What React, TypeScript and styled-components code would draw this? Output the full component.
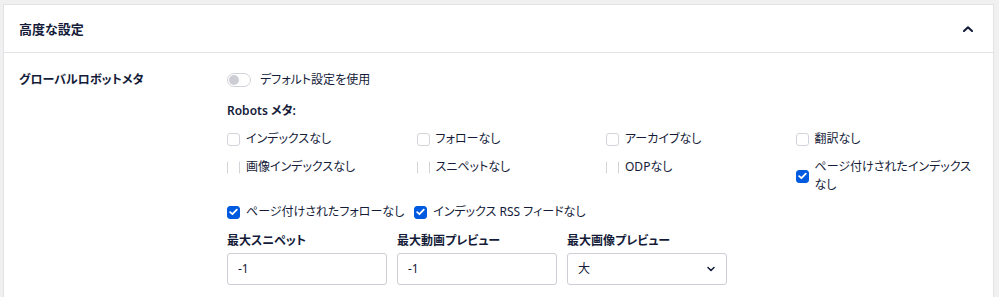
import styled, { createGlobalStyle } from "styled-components";

const GlobalStyle = createGlobalStyle`
  html, body {
    margin: 0;
    background: #f0f0f1;
  }
  body {
    font-family: "Noto Sans", "Noto Sans CJK JP", sans-serif;
    font-feature-settings: "palt";
    color: #141b38;
    overflow: hidden;
  }
  * { box-sizing: border-box; }
`;

const Page = styled.div`
  padding: 4px 5px 0 3px;
`;

const Card = styled.section`
  background: #fff;
  border: 1px solid #e2e3e6;
  min-height: 320px;
`;

const Header = styled.header`
  height: 48px;
  display: flex;
  align-items: center;
  justify-content: space-between;
  padding: 0 20px 0 15px;
  border-bottom: 1px solid #e2e3e6;
`;

const Title = styled.h2`
  margin: 0;
  font-size: 13px;
  font-weight: 700;
  line-height: 18px;
`;

const Row = styled.div`
  display: flex;
  padding: 17px 15px 0 15px;
`;

const RowLabel = styled.div`
  width: 208px;
  flex-shrink: 0;
  font-size: 12px;
  font-weight: 700;
  line-height: 18px;
  padding-top: 1px;
`;

const Content = styled.div`
  flex: 1;
  display: flex;
  flex-direction: column;
  font-size: 12px;
  line-height: 18px;
`;

const ToggleLine = styled.label`
  display: flex;
  align-items: center;
  gap: 9px;
  height: 20px;
`;

const Track = styled.span`
  width: 24px;
  height: 14px;
  border-radius: 7px;
  border: 1px solid #d2d3d9;
  background: #fff;
  display: flex;
  align-items: center;
  padding-left: 1px;
`;

const Knob = styled.span`
  width: 10px;
  height: 10px;
  border-radius: 50%;
  background: #cdced5;
`;

const SubTitle = styled.div`
  margin-top: 12px;
  font-size: 12px;
  font-weight: 600;
`;

const Grid = styled.div`
  display: grid;
  grid-template-columns: repeat(4, 189.5px);
  row-gap: 10px;
  margin-top: 10px;
  align-items: start;
`;

const Item = styled.label`
  display: flex;
  align-items: center;
  gap: 6px;
`;

const Text = styled.span`
  word-break: keep-all;
`;

const Box = styled.span<{ $checked?: boolean; $faint?: boolean }>`
  width: 13px;
  height: 13px;
  flex-shrink: 0;
  border-radius: 3px;
  border: 1px solid
    ${(p) => (p.$checked ? "#005ae0" : "#d3d4da")};
  ${(p) =>
    p.$faint &&
    `border-top-color: #fff; border-bottom-color: #fff; border-radius: 1px;`}
  background: ${(p) => (p.$checked ? "#005ae0" : "#fff")};
  display: flex;
  align-items: center;
  justify-content: center;
`;

const Inline = styled.div`
  display: flex;
  gap: 10px;
  margin-top: 9px;
`;

const Fields = styled.div`
  display: flex;
  gap: 10px;
  margin-top: 11px;
`;

const Field = styled.div`
  display: flex;
  flex-direction: column;
  gap: 3px;
  width: 160px;
`;

const FieldLabel = styled.div`
  font-size: 12px;
  font-weight: 700;
  line-height: 18px;
`;

const Input = styled.div`
  height: 32px;
  border: 1px solid #cdcfd6;
  border-radius: 3px;
  padding: 0 10px;
  display: flex;
  align-items: center;
  justify-content: space-between;
  font-size: 12px;
`;

const Check = () => (
  <svg width="9" height="8" viewBox="0 0 9 8">
    <path
      d="M1.2 4.2 L3.4 6.2 L7.8 1.6"
      fill="none"
      stroke="#fff"
      strokeWidth="1.8"
      strokeLinecap="round"
      strokeLinejoin="round"
    />
  </svg>
);

const Chevron = ({ up }: { up?: boolean }) => (
  <svg width="10" height="6" viewBox="0 0 10 6">
    <path
      d={up ? "M1 5 L5 1.2 L9 5" : "M2 1.5 L5 4.5 L8 1.5"}
      fill="none"
      stroke="#141b38"
      strokeWidth={up ? 2 : 1.5}
      strokeLinecap="round"
      strokeLinejoin="round"
    />
  </svg>
);

type Opt = { label: string; checked?: boolean; faint?: boolean };

const gridOptions: Opt[] = [
  { label: "インデックスなし" },
  { label: "フォローなし" },
  { label: "アーカイブなし" },
  { label: "翻訳なし" },
  { label: "画像インデックスなし", faint: true },
  { label: "スニペットなし", faint: true },
  { label: "ODPなし", faint: true },
  { label: "ページ付けされたインデックス\u200bなし", checked: true },
];

const Option = ({ label, checked, faint }: Opt) => (
  <Item>
    <Box $checked={checked} $faint={faint}>
      {checked && <Check />}
    </Box>
    <Text>{label}</Text>
  </Item>
);

export default function App() {
  return (
    <>
      <GlobalStyle />
      <Page>
        <Card>
          <Header>
            <Title>高度な設定</Title>
            <Chevron up />
          </Header>
          <Row>
            <RowLabel>グローバルロボットメタ</RowLabel>
            <Content>
              <ToggleLine>
                <Track>
                  <Knob />
                </Track>
                <span>デフォルト設定を使用</span>
              </ToggleLine>
              <SubTitle>Robots メタ:</SubTitle>
              <Grid>
                {gridOptions.map((o) => (
                  <Option key={o.label} {...o} />
                ))}
              </Grid>
              <Inline>
                <Option label="ページ付けされたフォローなし" checked />
                <Option label="インデックス RSS フィードなし" checked />
              </Inline>
              <Fields>
                <Field>
                  <FieldLabel>最大スニペット</FieldLabel>
                  <Input>-1</Input>
                </Field>
                <Field>
                  <FieldLabel>最大動画プレビュー</FieldLabel>
                  <Input>-1</Input>
                </Field>
                <Field>
                  <FieldLabel>最大画像プレビュー</FieldLabel>
                  <Input>
                    <span>大</span>
                    <Chevron />
                  </Input>
                </Field>
              </Fields>
            </Content>
          </Row>
        </Card>
      </Page>
    </>
  );
}
